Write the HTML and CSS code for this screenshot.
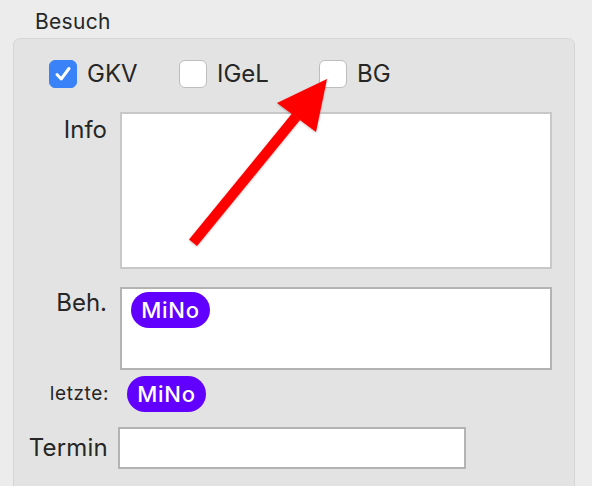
FILE: index.html
```html
<!DOCTYPE html>
<html lang="de">
<head>
    <meta charset="UTF-8">
    <title>Besuch</title>
    <link rel="stylesheet" href="styles.css">
</head>
<body>
<div class="panel">
    <div class="title">Besuch</div>
    <div class="group">
        <div class="checks">
            <label class="check gkv"><span class="box on"><svg width="28" height="28" viewBox="0 0 28 28"><path d="M8 14.5 L12.2 19 L20 8.5" fill="none" stroke="#fff" stroke-width="3" stroke-linecap="round" stroke-linejoin="round"/></svg></span>GKV</label>
            <label class="check igel"><span class="box"></span>IGeL</label>
            <label class="check bg"><span class="box"></span>BG</label>
        </div>
        <div class="form">
            <div class="label info-label">Info</div>
            <div class="area info"></div>

            <div class="label beh-label">Beh.</div>
            <div class="area beh"><span class="pill">MiNo</span></div>

            <div class="label small">letzte:</div>
            <div class="last"><span class="pill">MiNo</span></div>

            <div class="label termin-label">Termin</div>
            <div class="input"></div>
        </div>
    </div>

    <!-- roter Hinweispfeil -->
    <svg class="arrow" width="592" height="486" viewBox="0 0 592 486">
        <defs>
            <filter id="soft" x="-10%" y="-10%" width="120%" height="120%">
                <feDropShadow dx="0" dy="1" stdDeviation="1" flood-color="#000" flood-opacity="0.25"/>
            </filter>
        </defs>
        <g filter="url(#soft)" fill="#ff0000">
            <polygon points="189,239.5 197,246 300,120 292,113.5"/>
            <polygon points="327,79 277,103 316,132"/>
        </g>
    </svg>
</div>
</body>
</html>
```

FILE: styles.css
```css
* {
    margin: 0;
    padding: 0;
    box-sizing: border-box;
}

body {
    background: #ececec;
    font-family: Inter, "Liberation Sans", sans-serif;
    color: #262626;
    overflow: hidden;
}

.panel {
    position: relative;
    width: 592px;
    height: 486px;
}

.title {
    height: 38px;
    padding: 9px 0 0 35px;
    font-size: 21px;
    line-height: 26px;
    letter-spacing: 0.3px;
}

.group {
    margin-left: 13px;
    width: 562px;
    height: 470px;
    background: #e3e3e3;
    border: 1px solid #d6d6d6;
    border-radius: 7px;
}

.checks {
    display: flex;
    align-items: center;
    padding: 21px 0 0 35px;
    height: 49px;
}

.check {
    display: flex;
    align-items: center;
    gap: 10px;
    font-size: 24px;
    line-height: 28px;
}

.gkv {
    width: 130px;
}

.igel {
    width: 140px;
}

.box {
    width: 28px;
    height: 28px;
    border-radius: 6px;
    background: #fff;
    border: 1px solid #bdbdbd;
    display: block;
}

.box.on {
    background: #3a82f7;
    border-color: #3a82f7;
}

.box svg {
    display: block;
    margin: -1px;
}

.form {
    display: grid;
    grid-template-columns: 93px 432px;
    column-gap: 13px;
    margin-top: 24px;
}

.label {
    text-align: right;
    font-size: 24px;
    line-height: 28px;
}

.info-label {
    padding-top: 4px;
}

.beh-label {
    margin-top: 18px;
    padding-top: 2px;
}

.label.small {
    font-size: 19px;
    letter-spacing: 0.6px;
    align-self: center;
    margin-top: 6px;
    margin-right: -2px;
}

.termin-label {
    align-self: center;
    margin-top: 15px;
    margin-right: -1px;
    letter-spacing: 0.2px;
}

.area {
    background: #fff;
    border: 2px solid #b3b3b3;
}

.area.info {
    height: 157px;
    border-color: #c8c8c8;
}

.area.beh {
    height: 83px;
    margin-top: 18px;
    padding: 3px 0 0 9px;
}

.last {
    margin-top: 6px;
    padding-left: 7px;
    height: 36px;
}

.pill {
    display: inline-block;
    width: 79px;
    height: 36px;
    border-radius: 18px;
    background: #6200ff;
    color: #fff;
    font-size: 22px;
    font-weight: 500;
    line-height: 36px;
    text-align: center;
    letter-spacing: 0.8px;
}

.input {
    margin-top: 15px;
    margin-left: -2px;
    width: 348px;
    height: 42px;
    background: #fff;
    border: 2px solid #b3b3b3;
}

.arrow {
    position: absolute;
    left: 0;
    top: 0;
    pointer-events: none;
}
```
